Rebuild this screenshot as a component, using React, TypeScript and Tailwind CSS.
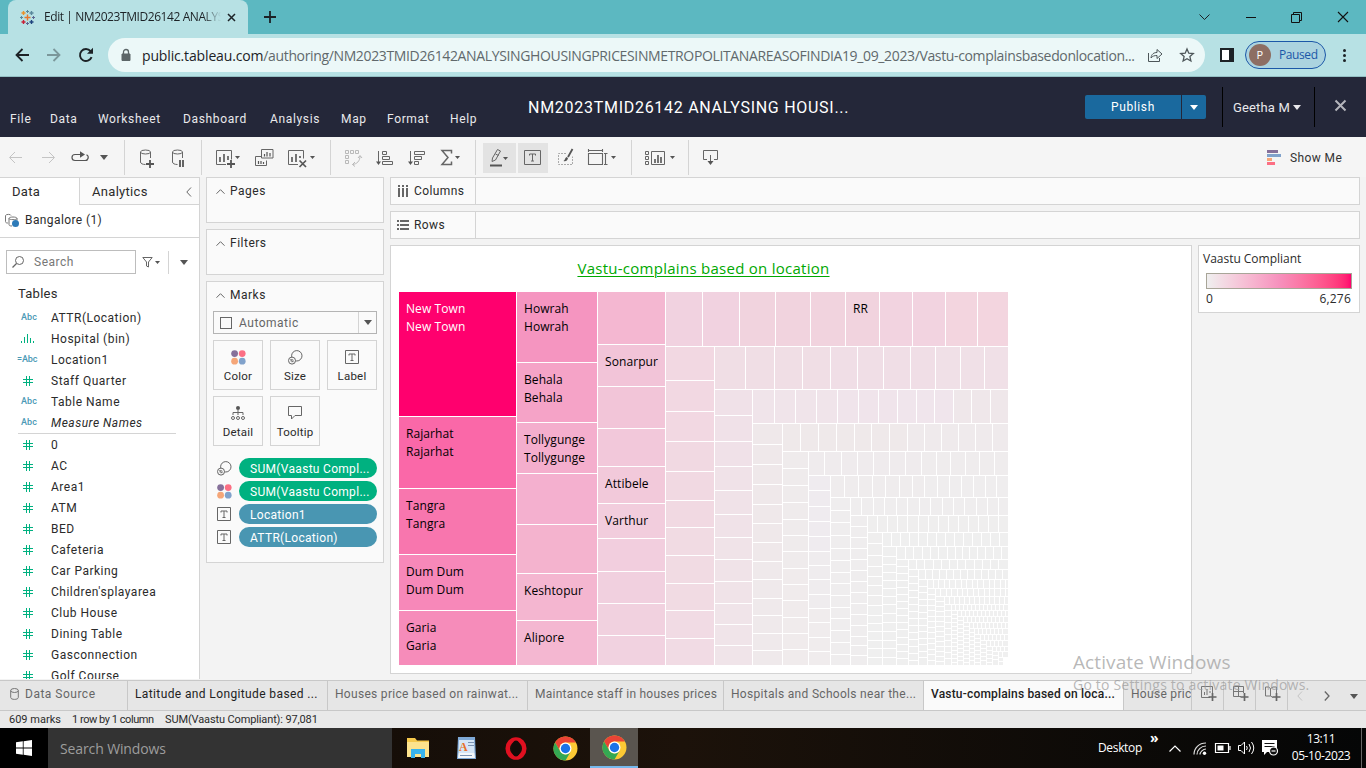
import React from "react";

type IcProps = { box: string; className?: string; children: React.ReactNode };

/* Icon whose viewBox units equal CSS pixels. */
function Ic({ box, className = "", children }: IcProps) {
  const [, , w, h] = box.split(" ").map(Number);
  return (
    <svg viewBox={box} width={w} height={h} fill="none" className={"shrink-0 overflow-visible " + className}>
      {children}
    </svg>
  );
}

/* ---------- Treemap ---------- */

type Strip = { dir: "col" | "row"; end: number; cuts: number[]; colors: string[] };

const every = (from: number, to: number, step: number) => {
  const out: number[] = [];
  for (let v = from + step; v < to - 2; v += step) out.push(Math.round(v));
  return out;
};

const STRIPS: Strip[] = [
  { dir: "col", end: 516, cuts: [416, 488, 554, 610], colors: ["#ff006e", "#fa68a8", "#f876ae", "#f788b9", "#f68cba"] },
  { dir: "col", end: 597, cuts: [362, 422, 473, 524, 573, 620], colors: ["#f595c0", "#f5a3c7", "#f4aecd", "#f4b0cf", "#f4b3ce", "#f4b6d0", "#f4b7d1"] },
  { dir: "col", end: 665, cuts: [344, 386, 428, 466, 503, 538, 571, 603, 635], colors: ["#f4b7d1", "#f2c4d8", "#f2c5d8", "#f2c8da", "#f2c9da", "#f2cddd", "#f2cede", "#f1d0df", "#f1d1df", "#f1d2e0"] },
  { dir: "row", end: 346, cuts: [702, 739, 775, 810, 845, 879, 912, 945, 977], colors: ["#f1d2e0", "#f1d2e0", "#f1d3de", "#f1d3de", "#f1d3de", "#f1d3de", "#f2d3e0", "#f2d3e0", "#f3d5df", "#f3d5df"] },
  { dir: "col", end: 714, cuts: [380, 411, 441, 471, 500, 527, 555, 583, 610, 638], colors: ["#f2d8e2", "#f1d9e2", "#f1dbe3", "#f1dbe4"] },
  { dir: "row", end: 389, cuts: [745, 774, 802, 830, 857, 883, 910, 935, 960, 984], colors: ["#f0dee5", "#f0dee6", "#f0e0e7"] },
  { dir: "col", end: 752, cuts: [415, 441, 466, 490, 514, 537, 559, 581, 603, 624, 645], colors: ["#f0e1e8", "#f0e2e8", "#f0e3e8", "#f0e4e9"] },
  { dir: "row", end: 423, cuts: [774, 795, 816, 837, 858, 878, 897, 916, 934, 953, 971, 990], colors: ["#f0e4ea", "#f0e4eb", "#f0e5ec", "#efe7ea"] },
  { dir: "col", end: 782, cuts: [444, 464, 484, 504, 523, 542, 561, 579, 598, 615, 633, 650], colors: ["#efe8ea", "#efe9eb"] },
  { dir: "row", end: 451, cuts: [800, 818, 836, 854, 871, 889, 907, 924, 941, 958, 975, 992], colors: ["#efe9ea", "#efeaec"] },
  { dir: "col", end: 808, cuts: [468, 485, 502, 519, 535, 551, 568, 584, 600, 617, 633, 649], colors: ["#efebec", "#f0ebec"] },
  { dir: "row", end: 475, cuts: [824, 841, 857, 873, 889, 905, 921, 936, 950, 965, 979, 994], colors: ["#efebed", "#efeced"] },
  { dir: "col", end: 830, cuts: [490, 506, 521, 536, 551, 565, 579, 594, 608, 622, 637, 651], colors: ["#efebef", "#efecee", "#f0eced"] },
  { dir: "row", end: 497, cuts: [844, 858, 872, 885, 899, 912, 924, 937, 949, 961, 973, 985, 996], colors: ["#efeced", "#efedee"] },
  { dir: "col", end: 850, cuts: [510, 522, 535, 548, 560, 572, 583, 595, 607, 618, 630, 642, 654], colors: ["#efedee"] },
  { dir: "row", end: 515, cuts: [861, 873, 884, 896, 907, 919, 930, 942, 953, 964, 976, 987, 998], colors: ["#efedee"] },
  { dir: "col", end: 867, cuts: [526, 537, 548, 559, 570, 581, 592, 603, 614, 625, 636, 645, 655], colors: ["#efedee"] },
  { dir: "row", end: 532, cuts: [877, 887, 897, 907, 918, 928, 938, 948, 958, 968, 978, 988, 998], colors: ["#efeeee"] },
  { dir: "col", end: 882, cuts: [543, 555, 566, 576, 585, 595, 605, 615, 623, 631, 640, 648, 657], colors: ["#efeeee", "#efefef"] },
  { dir: "row", end: 546, cuts: [891, 900, 909, 918, 927, 936, 945, 954, 963, 972, 981, 990, 999], colors: ["#efefef"] },
  { dir: "col", end: 896, cuts: [556, 564, 572, 580, 588, 596, 604, 613, 622, 631, 640, 648, 657], colors: ["#efefef"] },
  { dir: "row", end: 559, cuts: [905, 913, 922, 930, 938, 947, 955, 962, 969, 977, 985, 993, 1001], colors: ["#efefef"] },
  { dir: "col", end: 908, cuts: [566, 573, 580, 587, 594, 601, 608, 615, 622, 629, 637, 644, 651, 658], colors: ["#efefef"] },
  { dir: "row", end: 569, cuts: every(908, 1008, 8.2), colors: ["#efefef"] },
  { dir: "col", end: 918, cuts: every(569, 665, 7), colors: ["#efefef"] },
  { dir: "row", end: 579, cuts: every(918, 1008, 7), colors: ["#efefef"] },
  { dir: "col", end: 927, cuts: every(579, 665, 6.5), colors: ["#efefef"] },
  { dir: "row", end: 588, cuts: every(927, 1008, 5.6), colors: ["#f0f0f0"] },
  { dir: "col", end: 935, cuts: every(588, 665, 5.5), colors: ["#f0f0f0"] },
  { dir: "row", end: 596, cuts: every(935, 1008, 5.4), colors: ["#f0f0f0"] },
  { dir: "col", end: 944, cuts: every(596, 665, 5), colors: ["#f0f0f0"] },
  { dir: "row", end: 604, cuts: every(944, 1008, 5), colors: ["#f0f0f0"] },
  { dir: "col", end: 951, cuts: every(604, 665, 6), colors: ["#f0f0f0"] },
  ...[
    [610, 957], [616, 963], [622, 969], [628, 974], [634, 980], [640, 986], [646, 992], [651, 998], [657, 1003],
  ].flatMap(([y, x], i): Strip[] => [
    { dir: "row", end: y, cuts: every([951, 957, 963, 969, 974, 980, 986, 992, 998][i], 1008, 4), colors: ["#f0f0f0"] },
    { dir: "col", end: x, cuts: every(y, 665, 4), colors: ["#f0f0f0"] },
  ]),
];

function buildTiles() {
  const tiles: { x: number; y: number; w: number; h: number; c: string }[] = [];
  let x = 399;
  let y = 292;
  for (const s of STRIPS) {
    const stops = [...s.cuts, s.dir === "col" ? 665 : 1008];
    let p = s.dir === "col" ? y : x;
    stops.forEach((q, i) => {
      const c = s.colors[Math.min(s.colors.length - 1, s.colors.length === stops.length ? i : Math.floor((i / stops.length) * s.colors.length))];
      tiles.push(s.dir === "col" ? { x, y: p, w: s.end - x, h: q - p, c } : { x: p, y, w: q - p, h: s.end - y, c });
      p = q + 1;
    });
    if (s.dir === "col") x = s.end + 1;
    else y = s.end + 1;
  }
  return tiles;
}

const TILES = buildTiles();

const LABELS: [number, number, string, string?][] = [
  [406, 313, "New Town", "#fff"], [406, 331, "New Town", "#fff"],
  [406, 438, "Rajarhat"], [406, 456, "Rajarhat"],
  [406, 510, "Tangra"], [406, 528, "Tangra"],
  [406, 576, "Dum Dum"], [406, 594, "Dum Dum"],
  [406, 632, "Garia"], [406, 650, "Garia"],
  [524, 313, "Howrah"], [524, 331, "Howrah"],
  [524, 384, "Behala"], [524, 402, "Behala"],
  [524, 444, "Tollygunge"], [524, 462, "Tollygunge"],
  [524, 595, "Keshtopur"], [524, 642, "Alipore"],
  [605, 366, "Sonarpur"], [605, 488, "Attibele"], [605, 525, "Varthur"],
  [853, 313, "RR"],
];

function Treemap() {
  return (
    <svg viewBox="399 292 609 373" width="609" height="373" className="block">
      {TILES.map((t, i) => (
        <rect key={i} x={t.x} y={t.y} width={t.w} height={t.h} fill={t.c} shapeRendering="crispEdges" />
      ))}
      <g fontFamily="'Open Sans', 'Noto Sans', sans-serif" fontSize="12" letterSpacing="0.08">
        {LABELS.map(([x, y, t, c], i) => (
          <text key={i} x={x} y={y} fill={c ?? "#000"}>{t}</text>
        ))}
      </g>
    </svg>
  );
}

/* ---------- Shared glyphs ---------- */

function Caret({ className = "" }: { className?: string }) {
  return (
    <Ic box="0 0 8 5" className={className}>
      <path d="M0 0h8L4 5z" fill="currentColor" />
    </Ic>
  );
}

function SmallCaret({ className = "" }: { className?: string }) {
  return (
    <Ic box="0 0 5 3" className={className}>
      <path d="M0 0h5L2.5 3z" fill="currentColor" />
    </Ic>
  );
}

function ColorDots({ className = "" }: { className?: string }) {
  return (
    <Ic box="0 0 15 15" className={className}>
      <circle cx="3.6" cy="3.6" r="3.4" fill="#86709a" />
      <circle cx="11.2" cy="3.6" r="3.4" fill="#fc6f84" />
      <circle cx="3.6" cy="11.2" r="3.4" fill="#f5a678" />
      <circle cx="11.2" cy="11.2" r="3.4" fill="#81a2cb" />
    </Ic>
  );
}

function SizeIcon() {
  return (
    <Ic box="0 0 15 15">
      <g stroke="#666">
        <circle cx="8.8" cy="5.8" r="5.200" />
        <circle cx="4" cy="10.600" r="3.500" fill="#fafafa" />
        <path d="M2.500 9.200l3 3" />
        <circle cx="4" cy="10.600" r="1.300" strokeWidth=".6" />
      </g>
    </Ic>
  );
}

function TextIcon() {
  return (
    <Ic box="0 0 14 14">
      <path d="M.5 .5h13v13h-13z" stroke="#666" />
      <path d="M4 5.500V4h6v1.500M7 4v6.500M5.500 10.500h3" stroke="#666" />
    </Ic>
  );
}

function NumberIcon() {
  return (
    <Ic box="0 0 10 10">
      <path d="M0 3.500h10M0 6.500h10M3.500 0v10M6.500 0v10" stroke="#00b180" />
    </Ic>
  );
}

const Sep = ({ className = "" }: { className?: string }) => <div className={"h-[35px] w-px shrink-0 bg-[#d4d4d4] " + className} />;

const CHROME_FONT = "font-['Open_Sans','Noto_Sans',sans-serif]";

/* ---------- Browser ---------- */

function TabStrip() {
  return (
    <div className={"flex h-[34px] items-center bg-[#5cb8c1] text-[#1c2226] " + CHROME_FONT}>
      <div className="ml-2 flex h-full w-[240px] items-center rounded-t-lg bg-[#b7e1e4] pl-3">
        <Ic box="0 0 15 15">
          <g strokeWidth="1.400">
            <path d="M7.500 4.500v6M4.500 7.500h6" stroke="#e8762c" />
            <path d="M3.500 1v4M1.500 3h4" stroke="#eb9129" />
            <path d="M11.500 1v4M9.500 3h4" stroke="#59879b" />
            <path d="M3.500 10v4M1.500 12h4" stroke="#c72035" />
            <path d="M11.500 10v4M9.500 12h4" stroke="#1f447e" />
          </g>
          <path d="M7.500 0v3M6 1.500h3" stroke="#59879b" />
          <path d="M7.500 12v3M6 13.500h3" stroke="#5b6591" />
          <path d="M0 7.500h3M1.500 6v3" stroke="#59879b" />
          <path d="M12 7.500h3M13.500 6v3" stroke="#5b6591" />
        </Ic>
        <span className="ml-[9px] w-[177px] overflow-hidden text-[12px] tracking-[-0.42px] whitespace-nowrap [mask-image:linear-gradient(to_right,#000_90%,transparent)]">
          Edit | NM2023TMID26142 ANALYS
        </span>
        <Ic box="0 0 9 9" className="ml-[6px]">
          <path d="M1 1l7 7M8 1l-7 7" stroke="#1c2226" strokeWidth="1.500" />
        </Ic>
      </div>
      <Ic box="0 0 12 12" className="ml-4">
        <path d="M6 0v12M0 6h12" stroke="#1c2226" strokeWidth="1.800" />
      </Ic>
      <div className="flex-1" />
      <Ic box="0 0 11 7"><path d="M.5 .5L5.500 5.500L10.500 .5" stroke="#1c2226" /></Ic>
      <Ic box="0 0 10 10" className="ml-[36px]"><path d="M0 5.500h10" stroke="#111" /></Ic>
      <Ic box="0 0 11 11" className="ml-[35px]">
        <path d="M.5 2.500h8v8h-8zM2.500 2.500v-2h8v8h-2" stroke="#111" />
      </Ic>
      <Ic box="0 0 10 10" className="mr-[18px] ml-[36px]"><path d="M0 0l10 10M10 0L0 10" stroke="#111" strokeWidth="1.100" /></Ic>
    </div>
  );
}

function AddressBar() {
  return (
    <div className={"flex h-[43px] items-center border-b border-[#93bfc3] bg-[#b7e1e4] " + CHROME_FONT}>
      <Ic box="0 0 14 14" className="ml-[15px]">
        <path d="M14 7H1.500M7.500 1L1.500 7l6 6" stroke="#1c2226" strokeWidth="1.800" />
      </Ic>
      <Ic box="0 0 14 14" className="ml-[18px]">
        <path d="M0 7h12.500M6.500 1l6 6l-6 6" stroke="#7b979a" strokeWidth="1.800" />
      </Ic>
      <Ic box="0 0 16 16" className="ml-[17px]">
        <path d="M13.600 10.200A6 6 0 1 1 12.600 4.200" stroke="#1c2226" strokeWidth="1.900" />
        <path d="M15 .8v6h-6z" fill="#1c2226" />
      </Ic>
      <div className="ml-[14px] flex h-[34px] w-[1097px] shrink-0 items-center rounded-full bg-[#ecf8f8] pl-[13px]">
        <Ic box="0 0 10 12">
          <path d="M1 5h8v6.500H1z" fill="#5c6668" stroke="#5c6668" />
          <path d="M2.500 5V3a2.500 2.500 0 0 1 5 0v2" stroke="#5c6668" strokeWidth="1.300" />
        </Ic>
        <span className="ml-[11px] w-[1000px] text-[14px] tracking-[-0.36px] whitespace-nowrap text-[#61696c]">
          <span className="tracking-[-0.15px] text-[#1c2226]">public.tableau.com</span>
          /authoring/NM2023TMID26142ANALYSINGHOUSINGPRICESINMETROPOLITANAREASOFINDIA19_09_2023/Vastu-complainsbasedonlocation...
        </span>
        <Ic box="0 0 16 14" className="ml-[5px]">
          <path d="M1.500 5v8.500h11V10" stroke="#4d5659" />
          <path d="M4 10c.4-4 3-5.500 6-5.500V1.500l5 4.500l-5 4.500V7.500C7.500 7.500 5.500 8 4 10z" stroke="#4d5659" strokeLinejoin="round" />
        </Ic>
        <Ic box="0 0 14 14" className="ml-[17px]">
          <path d="M7 1l1.800 4.200l4.500.4l-3.400 3l1 4.400L7 10.700L3.100 13l1-4.400l-3.400-3l4.500-.4z" stroke="#4d5659" strokeWidth="1.300" />
        </Ic>
      </div>
      <div className="ml-[15px] flex h-[14px] w-[14px] shrink-0 border-2 border-r-[5px] border-[#1c2226] bg-white" />
      <div className="ml-[11px] flex h-[28px] w-[81px] items-center rounded-full border border-[#1b57a8] bg-[#abd3df] pl-[3px]">
        <span className="flex size-[22px] items-center justify-center rounded-full bg-[#8d6e63] text-[11px] text-white">P</span>
        <span className="ml-[8px] text-[12px] tracking-[-0.4px] text-[#1b57a8]">Paused</span>
      </div>
      <div className="ml-[17px] flex flex-col gap-[2px]">
        <i className="size-[3px] rounded-full bg-[#1c2226]" />
        <i className="size-[3px] rounded-full bg-[#1c2226]" />
        <i className="size-[3px] rounded-full bg-[#1c2226]" />
      </div>
    </div>
  );
}

/* ---------- Tableau chrome ---------- */

function AppHeader() {
  return (
    <header className="flex h-[60px] bg-[#242739] text-[12px] tracking-[0.65px] whitespace-nowrap text-[#e9e9ec]">
      <nav className="flex pt-[34px] pl-[10px] leading-4">
        <span className="w-[40px]">File</span>
        <span className="w-[48px]">Data</span>
        <span className="w-[85px]">Worksheet</span>
        <span className="w-[87px]">Dashboard</span>
        <span className="w-[71px]">Analysis</span>
        <span className="w-[46px]">Map</span>
        <span className="w-[63px]">Format</span>
        <span className="w-[78px]">Help</span>
      </nav>
      <h1 className="w-[557px] pt-[21px] text-[16px] leading-5 tracking-[0.72px] text-white">NM2023TMID26142 ANALYSING HOUSI...</h1>
      <div className="mt-[18px] flex h-6 gap-px text-white">
        <button className="w-[96px] rounded-l-xs bg-[#1a699e] tracking-[0.6px]">Publish</button>
        <button className="flex w-6 items-center justify-center rounded-r-xs bg-[#1a699e]"><Caret /></button>
      </div>
      <div className="mt-[10px] ml-4 flex h-[40px] w-[93px] items-center border-x border-black pt-px pl-[10px] text-[13px] tracking-[0.15px]">
        Geetha M
        <Caret className="ml-[3px]" />
      </div>
      <Ic box="0 0 11 11" className="mt-[23px] ml-[20px]"><path d="M.5 .5l10 10M10.500 .5l-10 10" stroke="#b4b5bb" strokeWidth="2" /></Ic>
    </header>
  );
}

function Toolbar() {
  return (
    <div className="flex h-10 items-center bg-[#f5f5f5] text-[#555]">
      <Ic box="9 151 13 12" className="ml-[9px]"><path d="M22 157.500H10M15 152l-5.500 5.500l5.500 5.500" stroke="#c4c4c4" /></Ic>
      <Ic box="42 151 13 12" className="ml-[20px]"><path d="M42 157.500h12M49 152l5.500 5.500l-5.500 5.500" stroke="#c4c4c4" /></Ic>
      <Ic box="71 147 18 20" className="ml-[16px]">
        <path d="M81 154.500h-6a3 3 0 0 0 0 6h10a3 3 0 0 0 1.500-5.700" stroke="#555" strokeWidth="1.200" />
        <path d="M80 151.200l5 3.300l-5 3.300z" fill="#555" />
      </Ic>
      <Caret className="ml-[11px]" />
      <Sep className="ml-[16px]" />
      <Ic box="140 147 15 20" className="ml-[15px]">
        <path d="M140.500 152v10c0 1.500 2 2.500 5 2.500M150.500 152v6" stroke="#666" />
        <ellipse cx="145.500" cy="152" rx="5" ry="2" stroke="#666" />
        <path d="M150 160v8M146 164h8" stroke="#555" strokeWidth="1.800" />
      </Ic>
      <Ic box="172 147 13 20" className="ml-[17px]">
        <path d="M172.500 152v10c0 1.500 2 2.500 5 2.500M182.500 152v6" stroke="#666" />
        <ellipse cx="177.500" cy="152" rx="5" ry="2" stroke="#666" />
        <path d="M180 160v7M183 160v7" stroke="#555" strokeWidth="1.800" />
      </Ic>
      <Sep className="ml-[16px]" />
      <Ic box="216 147 24 20" className="ml-[14px]">
        <path d="M226 164.500h-9.500v-14h15v9" stroke="#666" />
        <path d="M220 157v5M224 154v8M228 156v4" stroke="#555" strokeWidth="1.600" />
        <path d="M231 160v8M227 164h8" stroke="#555" strokeWidth="1.800" />
        <path d="M235 156h5l-2.500 3z" fill="#555" />
      </Ic>
      <Ic box="255 147 19 20" className="ml-[15px]">
        <path d="M261.500 149.500h11.500v8.500h-11.500zM261 156.500h-5.500v9h11v-5" stroke="#666" />
        <path d="M264.500 154v2.500M267 152v4.500M270 153v3.500M258.500 161v3M261 161v3M263.500 162v2" stroke="#555" strokeWidth="1.200" />
      </Ic>
      <Ic box="288 147 27 20" className="ml-[14px]">
        <path d="M298 164.500h-9.500v-14h15v8" stroke="#666" />
        <path d="M292 157v5M296 154v8M300 156v2" stroke="#555" strokeWidth="1.600" />
        <path d="M299.500 160.500l6.500 6.500M306 160.500l-6.500 6.500" stroke="#555" strokeWidth="1.700" />
        <path d="M310 156h5l-2.500 3z" fill="#555" />
      </Ic>
      <Sep className="ml-[15px]" />
      <Ic box="345 147 18 20" className="ml-[14px]">
        <path d="M345.500 150.500h3v3h-3zM350.500 150.500h3v3h-3zM355.500 150.500h3v3h-3zM345.500 155.500h3v3h-3zM345.500 160.500h3v3h-3zM360 156c0 5-3 8-7.500 8.500M358 158l2-2.500l2 2.500M355 162l-2.500 2.500l2.500 2" stroke="#b9b9b9" />
      </Ic>
      <Ic box="376 147 18 20" className="ml-[13px]">
        <path d="M378.500 151v13" stroke="#666" />
        <path d="M376 161.500h5l-2.500 3.500z" fill="#555" />
        <path d="M382.500 151.500h4v3h-4zM382.500 156.500h7v3h-7zM382.500 161.500h10v3h-10z" stroke="#666" />
      </Ic>
      <Ic box="408 147 18 20" className="ml-[14px]">
        <path d="M410.500 151v13" stroke="#666" />
        <path d="M408 161.500h5l-2.500 3.500z" fill="#555" />
        <path d="M414.500 151.500h10v3h-10zM414.500 156.500h7v3h-7zM414.500 161.500h4v3h-4z" stroke="#666" />
      </Ic>
      <Ic box="440 147 21 20" className="ml-[14px]">
        <path d="M451.500 153.500v-3H442l6 7l-6 7h9.500v-3" stroke="#666" strokeWidth="1.500" />
        <path d="M455 156h5l-2.500 3z" fill="#555" />
      </Ic>
      <Sep className="ml-[14px]" />
      <div className="mt-px ml-[7px] flex h-[30px] w-[33px] items-center bg-[#e3e3e3]">
        <Ic box="490 147 19 20" className="ml-[7px]">
          <path d="M497.500 148.500l3 1.500l-5 9l-3.500 1.500l.5-3.500zM495.500 153l3 1.500" stroke="#666" />
          <path d="M490 164.500h12" stroke="#555" strokeWidth="2" />
          <path d="M503 156h5l-2.500 3z" fill="#555" />
        </Ic>
      </div>
      <div className="mt-px ml-[2px] flex h-[30px] w-[30px] items-center bg-[#e3e3e3]">
        <Ic box="0 0 17 15" className="ml-[6px]">
          <path d="M.5 .5h16v14H.5z" stroke="#666" />
          <path d="M5.500 5.500V4h6v1.500M8.500 4v7M7 11h3" stroke="#666" />
        </Ic>
      </div>
      <Ic box="558 147 16 20" className="ml-[10px]">
        <path d="M566 153.500h-7.500v11h14v-8" stroke="#aaa" strokeDasharray="2 1" />
        <path d="M572.500 149l-4.500 8" stroke="#555" strokeWidth="1.800" />
        <path d="M568 158l-1.500-1c-2 1-1 3-3 4c2 .7 4 0 4.500-3z" fill="#555" />
      </Ic>
      <Ic box="588 147 29 20" className="ml-[14px]">
        <path d="M588.500 153.500h14v11h-14zM588.500 149v3M602.500 149v3M588 150.500h15M605.500 153v12M604 153.500h3.500M604 164.500h3.500" stroke="#666" strokeWidth="1.100" />
        <path d="M611 156h5l-2.500 3z" fill="#555" />
      </Ic>
      <Sep className="ml-[14px]" />
      <Ic box="645 147 31 20" className="ml-[13px]">
        <path d="M645.500 151.500h3v3h-3zM645.500 156.500h3v3h-3zM645.500 161.500h3v3h-3zM651.500 151.500h13v13h-13z" stroke="#666" />
        <path d="M655 159v4M658 155v8M661 157v6" stroke="#555" strokeWidth="1.600" />
        <path d="M670 156h5l-2.500 3z" fill="#555" />
      </Ic>
      <Sep className="ml-[12px]" />
      <Ic box="703 147 16 20" className="ml-[14px]">
        <path d="M707 159.500h-3.500v-9h14v9H714M710.500 155v8" stroke="#666" />
        <path d="M707.500 161h6l-3 4z" fill="#555" />
      </Ic>
      <div className="flex-1" />
      <Ic box="0 0 14 15" className="mt-px">
        <path d="M0 0h11v3H0z" fill="#86709a" />
        <path d="M0 4h14v3H0z" fill="#81a2cb" />
        <path d="M0 8h5v3H0z" fill="#f5a678" />
        <path d="M0 12h8v3H0z" fill="#fc6f84" />
      </Ic>
      <span className="mt-[2px] mr-[16px] ml-[9px] w-[60px] text-[12px] tracking-[0.4px] text-[#333]">Show Me</span>
    </div>
  );
}

const DIMENSIONS: { icon: "abc" | "bin" | "calc" | "num"; label: string; italic?: boolean }[] = [
  { icon: "abc", label: "ATTR(Location)" },
  { icon: "bin", label: "Hospital (bin)" },
  { icon: "calc", label: "Location1" },
  { icon: "num", label: "Staff Quarter" },
  { icon: "abc", label: "Table Name" },
  { icon: "abc", label: "Measure Names", italic: true },
];

const MEASURES = ["0", "AC", "Area1", "ATM", "BED", "Cafeteria", "Car Parking", "Children'splayarea", "Club House", "Dining Table", "Gasconnection", "Golf Course"];

function Field({ icon, label, italic }: { icon: string; label: string; italic?: boolean }) {
  return (
    <div className="flex h-[21px] shrink-0 items-center whitespace-nowrap">
      <span className="flex w-[51px] shrink-0 items-center text-[9px] tracking-[0.1px] text-[#4a99b5]">
        {icon === "abc" && <span className="pl-[21px] font-medium">Abc</span>}
        {icon === "calc" && <span className="pl-[17px] font-medium tracking-[-0.1px]">=Abc</span>}
        {icon === "num" && <span className="pl-[23px]"><NumberIcon /></span>}
        {icon === "bin" && (
          <Ic box="0 0 14 9" className="ml-[20px]"><path d="M1.500 7v2M4.500 3v6M7.500 0v9M10.500 4v5M13.500 7v2" stroke="#00b180" /></Ic>
        )}
      </span>
      <span className={italic ? "italic" : ""}>{label}</span>
    </div>
  );
}

function DataPane() {
  return (
    <aside className="flex w-[200px] shrink-0 flex-col overflow-hidden border-r border-[#d4d4d4] bg-white">
      <div className="flex h-[28px] shrink-0 border-t border-[#d4d4d4] text-[13px] tracking-[0.3px]">
        <div className="w-[79px] pt-[4px] pl-3">Data</div>
        <div className="flex flex-1 items-center border-b border-l border-[#d4d4d4] bg-[#fafafa] pt-px pl-3">
          Analytics
          <Ic box="0 0 6 10" className="mr-[7px] ml-auto"><path d="M5 .5L.8 5L5 9.500" stroke="#666" /></Ic>
        </div>
      </div>
      <div className="flex h-[33px] shrink-0 items-center border-b border-[#d4d4d4] pb-[2px] pl-[5px]">
        <Ic box="0 0 15 15">
          <path d="M6 2.500C6 1 1 1 .5 2.500v6C.5 10 2 10 3 10M4 5.500c0-2 8-2 8 0M4 5.500v6c0 1 1 1.500 3 1.500M4 5.500c0 1.500 8 1.500 8 0v2" stroke="#777" />
          <circle cx="10.500" cy="10.500" r="3.500" fill="#2d7ab8" />
        </Ic>
        <span className="ml-[5px] tracking-[0.4px]">Bangalore (1)</span>
      </div>
      <div className="mt-[12px] ml-[6px] flex h-[24px] shrink-0 items-center text-[#555]">
        <div className="flex h-full w-[130px] items-center border border-[#bdbdbd] pl-[5px] text-[#777]">
          <Ic box="0 0 12 12"><circle cx="7.500" cy="4.500" r="4" stroke="#666" /><path d="M4.500 7.500L.5 11.500" stroke="#666" strokeWidth="1.300" /></Ic>
          <span className="ml-[10px]">Search</span>
        </div>
        <Ic box="0 0 11 11" className="ml-[6px]"><path d="M.8 .5h9.400L6.500 5v5l-2-1V5z" stroke="#666" /></Ic>
        <SmallCaret className="ml-[2px]" />
        <div className="ml-[8px] h-[23px] w-px bg-[#d4d4d4]" />
        <Caret className="ml-[11px]" />
      </div>
      <div className="mt-[9px] h-[24px] shrink-0 pt-[1px] pl-[18px] text-[13px] tracking-[0.25px]">Tables</div>
      {DIMENSIONS.map((f) => <Field key={f.label} {...f} />)}
      <div className="mr-[23px] ml-[18px] h-px shrink-0 bg-[#d4d4d4]" />
      {MEASURES.map((m) => <Field key={m} icon="num" label={m} />)}
    </aside>
  );
}

function CardTitle({ children }: { children: string }) {
  return (
    <div className="flex items-center pt-[5px] pl-[9px] leading-4">
      <Ic box="0 0 9 5"><path d="M.5 4.700L4.500 .7L8.500 4.700" stroke="#666" /></Ic>
      <span className="ml-[5px]">{children}</span>
    </div>
  );
}

function MarkButton({ icon, label }: { icon: React.ReactNode; label: string }) {
  return (
    <div className="flex h-[50px] w-[50px] flex-col items-center justify-between border border-[#d4d4d4] pt-[9px] pb-[5px] text-[11.500px] leading-4 tracking-[0.2px]">
      {icon}
      <span>{label}</span>
    </div>
  );
}

function Pill({ icon, color, label }: { icon: React.ReactNode; color: string; label: string }) {
  return (
    <div className="flex h-5 items-center">
      <span className="flex w-[26px] items-center pl-[4px]">{icon}</span>
      <span className={"h-5 w-[138px] rounded-full pl-[11px] leading-[22px] tracking-[0.3px] text-white " + color}>{label}</span>
    </div>
  );
}

function Cards() {
  const card = "border border-[#d4d4d4] bg-[#fafafa]";
  return (
    <section className="ml-[6px] flex w-[178px] shrink-0 flex-col gap-[6px]">
      <div className={"h-[46px] " + card}><CardTitle>Pages</CardTitle></div>
      <div className={"h-[46px] " + card}><CardTitle>Filters</CardTitle></div>
      <div className={"h-[282px] " + card}>
        <CardTitle>Marks</CardTitle>
        <div className="mt-[8px] ml-[6px] flex h-[23px] w-[164px] items-center border border-[#b4b4b4] pl-[6px] text-[#666]">
          <div className="size-[12px] border border-[#666]" />
          <span className="ml-[7px]">Automatic</span>
          <div className="ml-auto flex h-full w-[18px] items-center justify-center border-l border-[#d4d4d4] text-[#555]"><Caret /></div>
        </div>
        <div className="mt-[6px] ml-[6px] flex flex-wrap gap-x-[7px] gap-y-[6px]">
          <MarkButton icon={<ColorDots />} label="Color" />
          <MarkButton icon={<SizeIcon />} label="Size" />
          <MarkButton icon={<TextIcon />} label="Label" />
          <MarkButton
            icon={
              <Ic box="0 0 14 14">
                <circle cx="7" cy="2" r="2" fill="#555" />
                <path d="M7 4v5M2 9V6.500h10V9" stroke="#666" />
                <g stroke="#666">
                  <circle cx="2" cy="12" r="1.500" />
                  <circle cx="7" cy="12" r="1.500" />
                  <circle cx="12" cy="12" r="1.500" />
                </g>
              </Ic>
            }
            label="Detail"
          />
          <MarkButton icon={<Ic box="0 0 14 14"><path d="M.5 .5h13v9H7L3.500 13V9.500h-3z" stroke="#666" /></Ic>} label="Tooltip" />
        </div>
        <div className="mt-[12px] ml-[6px] flex flex-col gap-[3px]">
          <Pill icon={<SizeIcon />} color="bg-[#00b180]" label="SUM(Vaastu Compl..." />
          <Pill icon={<ColorDots />} color="bg-[#00b180]" label="SUM(Vaastu Compl..." />
          <Pill icon={<TextIcon />} color="bg-[#4996b2]" label="Location1" />
          <Pill icon={<TextIcon />} color="bg-[#4996b2]" label="ATTR(Location)" />
        </div>
      </div>
    </section>
  );
}

function Shelf({ icon, label }: { icon: React.ReactNode; label: string }) {
  return (
    <div className="flex h-[28px] shrink-0 items-center border border-[#d4d4d4] bg-[#fafafa]">
      <div className="flex h-full w-[85px] items-center border-r border-[#d4d4d4] pl-[6px]">
        {icon}
        <span className="ml-[5px] tracking-[0.4px]">{label}</span>
      </div>
    </div>
  );
}

function Workspace() {
  return (
    <main className="mr-[6px] ml-[6px] flex flex-1 flex-col gap-[6px]">
      <Shelf icon={<Ic box="0 0 12 12"><path d="M2 0v2M6 0v2M10 0v2M2 3v9M6 3v9M10 3v9" stroke="#666" strokeWidth="2" /></Ic>} label="Columns" />
      <Shelf icon={<Ic box="0 0 12 10"><path d="M0 1h2M0 5h2M0 9h2M3 1h9M3 5h9M3 9h9" stroke="#666" strokeWidth="2" /></Ic>} label="Rows" />
      <div className="flex gap-[6px]">
        <div className="h-[429px] w-[802px] border border-[#d4d4d4] bg-white pl-[8px] font-['Open_Sans','Noto_Sans',sans-serif]">
          <h2 className="h-[46px] w-[609px] pt-[12px] text-center text-[15px] leading-5 tracking-[0.27px] text-[#00a800] underline decoration-1 underline-offset-2">
            Vastu-complains based on location
          </h2>
          <Treemap />
        </div>
        <div className="h-[68px] w-[162px] border border-[#d4d4d4] bg-white pl-[4px] font-['Open_Sans','Noto_Sans',sans-serif] text-[12px]">
          <div className="pt-[5px] leading-4 tracking-[-0.02px]">Vaastu Compliant</div>
          <div className="mt-[6px] ml-[3px] h-[16px] w-[146px] border border-[#a8a598] bg-linear-to-r from-[#efefef] via-[#f691bd] to-[#ff006e]" />
          <div className="mt-[2px] ml-[3px] flex w-[145px] justify-between leading-4 tracking-[0.2px]"><span>0</span><span>6,276</span></div>
        </div>
      </div>
    </main>
  );
}

function SheetTabs() {
  const tab = "flex h-full shrink-0 items-center overflow-hidden border-r border-[#c8c8c8] pl-[7px] pb-[3px]";
  return (
    <div className="flex h-[31px] shrink-0 border-y border-[#c8c8c8] bg-[#e6e6e6] text-[12px] tracking-[0.3px] whitespace-nowrap text-[#666]">
      <div className={tab + " w-[128px]"}>
        <Ic box="0 0 9 12" className="ml-[3px]">
          <ellipse cx="4.500" cy="2.500" rx="3.800" ry="2" stroke="#777" />
          <path d="M.7 2.500v7c0 2.500 7.600 2.500 7.600 0v-7" stroke="#777" />
        </Ic>
        <span className="ml-[6px] tracking-[0.5px]">Data Source</span>
      </div>
      <div className={tab + " w-[200px] tracking-[0.38px] text-[#222]"}>Latitude and Longitude based ...</div>
      <div className={tab + " w-[200px]"}>Houses price based on rainwat...</div>
      <div className={tab + " w-[196px] tracking-[0.25px]"}>Maintance staff in houses prices</div>
      <div className={tab + " w-[200px]"}>Hospitals and Schools near the...</div>
      <div className={tab + " w-[200px] bg-[#fafafa] font-medium tracking-[0.18px] text-[#222]"}>Vastu-complains based on loca...</div>
      <div className={tab + " w-[68px]"}>House price</div>
      <div className={tab + " w-[32px]"}>
        <Ic box="0 0 17 17" className="ml-[2px]"><path d="M9 11.500H.5V.5h11V7M3.500 6v3M6 3v6M9 5v2" stroke="#777" /><path d="M11.500 7v8M7.500 11h8" stroke="#666" strokeWidth="1.700" /></Ic>
      </div>
      <div className={tab + " w-[32px]"}>
        <Ic box="0 0 17 17" className="ml-[2px]"><path d="M8 10.500H.5V.5h10V7M5.500 .5v10M.5 5.500h10" stroke="#777" /><path d="M11.500 7v8M7.500 11h8" stroke="#666" strokeWidth="1.700" /></Ic>
      </div>
      <div className={tab + " w-[32px]"}>
        <Ic box="0 0 17 17" className="ml-[2px]"><path d="M8 11.500L5.500 10H.5V1h3l2 1.500L8 1h3.500v6M5.500 2.500V10" stroke="#777" /><path d="M11.500 7v8M7.500 11h8" stroke="#666" strokeWidth="1.700" /></Ic>
      </div>
      <div className="flex items-center pt-px text-[#555]">
        <Ic box="0 0 6 10" className="ml-[9px]"><path d="M5 .5L.8 5L5 9.500" stroke="#c4c4c4" /></Ic>
        <Ic box="0 0 6 10" className="ml-[21px]"><path d="M.8 .5L5 5L.8 9.500" stroke="#666" strokeWidth="1.300" /></Ic>
        <Caret className="ml-[20px]" />
      </div>
    </div>
  );
}

/* ---------- Taskbar ---------- */

function ChromeLogo() {
  return (
    <svg viewBox="0 0 48 48" width="25" height="25">
      <circle cx="24" cy="24" r="23" fill="#fcc934" />
      <path d="M4 12.500A23 23 0 0 1 44 12.500H24A11.500 11.500 0 0 0 14 30z" fill="#ea4335" />
      <path d="M4 12.500A23 23 0 0 0 24 47L34 29.800A11.500 11.500 0 0 1 14 29.800z" fill="#34a853" />
      <circle cx="24" cy="24" r="11.500" fill="#fff" />
      <circle cx="24" cy="24" r="9" fill="#1a73e8" />
    </svg>
  );
}

function Taskbar() {
  return (
    <div className={"flex h-10 shrink-0 items-center bg-linear-to-r from-[#0e0906] via-[#1c120a] to-[#050606] text-white " + CHROME_FONT}>
      <div className="flex h-full w-[48px] items-center bg-black pl-[16px]">
        <Ic box="0 0 16 16">
          <path d="M0 2.300L6.800 1.300V7.600H0zM7.600 1.200L16 0v7.600H7.600zM0 8.400h6.800v6.300L0 13.700zM7.600 8.400H16V16l-8.400-1.200z" fill="#fff" />
        </Ic>
      </div>
      <div className="flex h-full w-[344px] items-center bg-[#333] pl-3 text-[14px] tracking-[-0.12px] text-[#9d9d9d]">Search Windows</div>
      <Ic box="0 0 22 20" className="ml-[15px]">
        <path d="M0 0h8l2 2.500h12V18H0z" fill="#f6c94c" />
        <path d="M0 4h22v15H0z" fill="#fde38d" />
        <path d="M4 11h14v9h-4v-4H8v4H4z" fill="#38b3ec" />
      </Ic>
      <Ic box="0 0 19 23" className="ml-[28px]">
        <path d="M1 0h17l1 22H0z" fill="#7fa9d6" />
        <path d="M2 3h15l.5 13h-16z" fill="#d5e6f7" />
        <path d="M1.500 16h16l.5 5H1z" fill="#f4f7fa" />
        <path d="M11 5.500h6M11 8.500h6M3 18.500h12" stroke="#7b93b4" />
        <text x="2" y="14" fontSize="12" fontWeight="700" fontFamily="Liberation Serif, serif" fill="#e8702a">A</text>
      </Ic>
      <Ic box="0 0 22 23" className="ml-[29px]">
        <ellipse cx="11" cy="11.500" rx="8.300" ry="9" stroke="#e01020" strokeWidth="4.500" />
        <ellipse cx="11" cy="11.500" rx="4.500" ry="8" fill="#140b08" />
      </Ic>
      <div className="ml-[26px]"><ChromeLogo /></div>
      <div className="ml-[12px] flex h-full w-[48px] items-center justify-center border-b-2 border-[#76b9ed] bg-[#5a554f]"><ChromeLogo /></div>
      <div className="flex-1" />
      <span className="text-[12px] tracking-[-0.35px]">Desktop</span>
      <span className="ml-[8px] pb-5 text-[14px] leading-5 font-bold">»</span>
      <Ic box="0 0 12 7" className="ml-[10px]"><path d="M.5 6.500L6 1l5.500 5.500" stroke="#fff" strokeWidth="1.200" /></Ic>
      <Ic box="0 0 14 13" className="ml-[12px]">
        <path d="M1 12.500C1 6 6 1 13 1M4 12.500C4 8 8 4 13 4M7 12.500C7 10 10 7 13 7" stroke="#ddd" strokeWidth="1.200" />
        <circle cx="11.500" cy="11.200" r="1.700" fill="#fff" />
      </Ic>
      <Ic box="0 0 16 10" className="ml-[8px]"><path d="M.5 .5h13v9H.5zM15 3v4" stroke="#fff" strokeWidth="1.200" /><path d="M2.500 2.500h6v5h-6z" fill="#fff" /></Ic>
      <Ic box="0 0 17 14" className="ml-[7px]">
        <path d="M.5 4.500h2.500L6.500 1v12L3 9.500H.5z" stroke="#fff" />
        <path d="M8.500 5q1.500 2 0 4M11 3q3 4 0 8M13.500 1q4.500 6 0 12" stroke="#fff" />
      </Ic>
      <Ic box="0 0 17 16" className="ml-[7px]">
        <path d="M0 0h15v8l-6 4H5l-3 3v-3H0z" fill="#fff" />
        <path d="M2.500 3.500h10M2.500 6.500h10" stroke="#111" />
        <circle cx="11.500" cy="11" r="4" fill="#111" stroke="#fff" strokeWidth="1.200" />
        <path d="M9.500 11h4" stroke="#fff" strokeWidth="1.200" />
      </Ic>
      <div className="mb-[2px] ml-[11px] w-[62px] text-center text-[12px] leading-[17px] tracking-[-0.4px]">
        <div>13:11</div>
        <div>05-10-2023</div>
      </div>
      <div className="mr-1 ml-[9px] h-full w-px bg-[#666]" />
    </div>
  );
}

export default function App() {
  return (
    <div className="relative flex h-[768px] w-[1366px] flex-col overflow-hidden bg-[#f3f3f3] font-['Roboto','Liberation_Sans',sans-serif] text-[12px] tracking-[0.5px] text-[#2b2b2b]">
      <TabStrip />
      <AddressBar />
      <AppHeader />
      <Toolbar />
      <div className="flex h-[503px] shrink-0 overflow-hidden pb-px">
        <DataPane />
        <Cards />
        <Workspace />
      </div>
      <SheetTabs />
      <div className="flex h-[17px] shrink-0 items-center bg-[#e9e9e9] pt-px pl-[9px] text-[11px] tracking-[0px] whitespace-nowrap">
        <span className="w-[63px]">609 marks</span>
        <span className="w-[93px] tracking-[-0.45px]">1 row by 1 column</span>
        <span className="tracking-[-0.13px]">SUM(Vaastu Compliant): 97,081</span>
      </div>
      <Taskbar />
      <div className={"pointer-events-none absolute top-[650px] left-[1073px] whitespace-nowrap text-[#999]/70 " + CHROME_FONT}>
        <div className="text-[19px] leading-[24px] tracking-[0.1px]">Activate Windows</div>
        <div className="text-[14px] leading-[22px] tracking-[0.2px]">Go to Settings to activate Windows.</div>
      </div>
    </div>
  );
}
